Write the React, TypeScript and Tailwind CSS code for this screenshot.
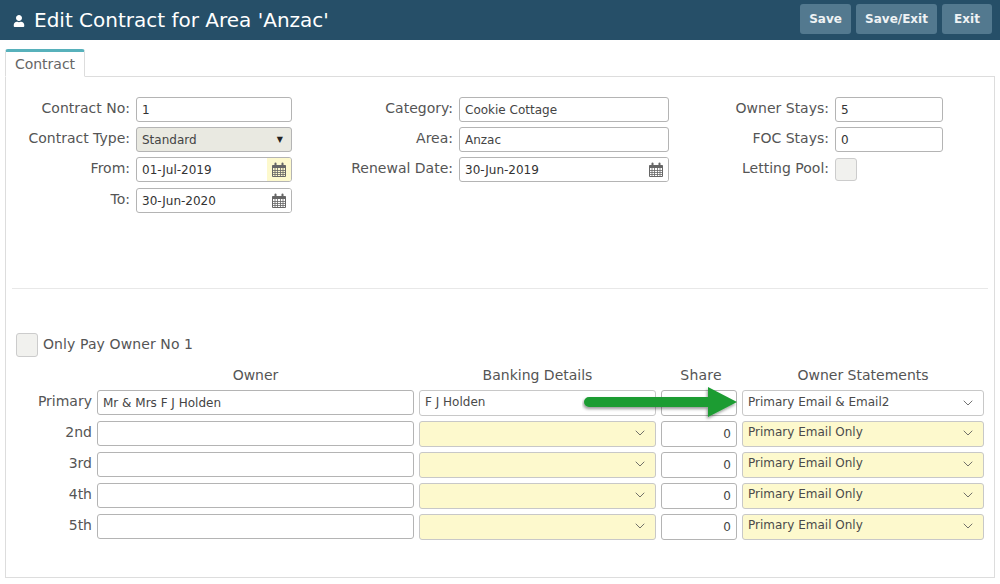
import { ChevronDown } from 'lucide-react';
import { FaUser } from 'react-icons/fa';

const inputClass = 'flex h-[25px] items-center rounded-[3px] border border-[#b4b4b4] px-[5px] text-[12px]';

const buttons = [
  { label: 'Save', width: 'w-[51px]' },
  { label: 'Save/Exit', width: 'w-[81px]' },
  { label: 'Exit', width: 'w-[50px]' },
];

function CalendarIcon() {
  return (
    <svg width="14" height="15" viewBox="0 0 14 15" className="text-[#666]">
      <path d="M0.5 3.5h13v11h-13z" fill="none" stroke="currentColor" />
      <path d="M0.5 3.5h13v2.5h-13z" fill="currentColor" />
      <path
        d="M0 8.5h14M0 10.5h14M0 12.5h14M3 6v8M5.5 6v8M8.5 6v8M11 6v8"
        stroke="currentColor"
        strokeWidth="0.8"
      />
      <rect x="2.5" y="0.5" width="2" height="4" rx="1" fill="currentColor" />
      <rect x="9.5" y="0.5" width="2" height="4" rx="1" fill="currentColor" />
    </svg>
  );
}

function Row({ label, children }: { label: string; children: React.ReactNode }) {
  return (
    <div className="flex h-[25px] items-center justify-end gap-[6px]">
      <span className="-mt-[3px] text-[14px] text-[#555]">{label}</span>
      {children}
    </div>
  );
}

function DateField({ value, width, highlight }: { value: string; width: string; highlight?: boolean }) {
  return (
    <div className={`${inputClass} ${width} justify-between overflow-hidden bg-white pr-0 text-[#333]`}>
      <span>{value}</span>
      <span
        className={`flex h-full w-[24px] items-center justify-center ${highlight ? 'bg-[#fdf9cd]' : 'bg-white'}`}
      >
        <CalendarIcon />
      </span>
    </div>
  );
}

function Select({ value, filled }: { value?: string; filled?: boolean }) {
  return (
    <div
      className={`flex h-[26px] items-center justify-between rounded-[3px] border border-[#c8c8c8] pl-[5px] pr-[7px] text-[12px] text-[#4a4a4a] ${
        filled ? 'bg-[#fdf9cd]' : 'bg-white'
      }`}
    >
      <span className={filled ? '-mt-[5px]' : '-mt-[3px]'}>{value}</span>
      <ChevronDown size={16} strokeWidth={1.25} className={`text-[#555] ${filled ? '-mt-[2px]' : ''}`} />
    </div>
  );
}

const owners = [
  { label: 'Primary', owner: 'Mr & Mrs F J Holden', bank: 'F J Holden', share: '', statement: 'Primary Email & Email2' },
  { label: '2nd', owner: '', bank: '', share: '0', statement: 'Primary Email Only' },
  { label: '3rd', owner: '', bank: '', share: '0', statement: 'Primary Email Only' },
  { label: '4th', owner: '', bank: '', share: '0', statement: 'Primary Email Only' },
  { label: '5th', owner: '', bank: '', share: '0', statement: 'Primary Email Only' },
];

export default function App() {
  return (
    <div className="h-[584px] w-[1000px] overflow-hidden bg-white font-['DejaVu_Sans',Verdana,sans-serif]">
      <header className="flex h-[40px] items-center justify-between bg-[#264f68] pl-[13px] pr-[8px]">
        <div className="flex items-center gap-[9px] text-white">
          <FaUser size={12} className="mt-[2px]" />
          <h1 className="text-[20px] leading-none">Edit Contract for Area 'Anzac'</h1>
        </div>
        <div className="-mt-[2px] flex gap-[5px]">
          {buttons.map((button) => (
            <button
              key={button.label}
              type="button"
              className={`h-[30px] rounded-[3px] bg-[#53798f] text-[12px] font-bold text-[#eef2f4] ${button.width}`}
            >
              {button.label}
            </button>
          ))}
        </div>
      </header>

      <div className="px-[5px] pt-[9px]">
        <div className="relative z-10 -mb-px flex h-[28px] w-[80px] items-center justify-center rounded-t-[3px] border-x border-b border-x-[#ddd] border-b-white border-t-[3px] border-t-[#57b1bb] bg-white text-[14px] text-[#666]">
          Contract
        </div>

        <div className="relative h-[502px] border border-[#ddd]">
          <div className="flex pt-[20px]">
            <div className="flex w-[286px] flex-col gap-[5px]">
              <Row label="Contract No:">
                <div className={`${inputClass} w-[156px] bg-white text-[#333]`}>1</div>
              </Row>
              <Row label="Contract Type:">
                <div className={`${inputClass} w-[156px] justify-between bg-[#e9e9e1] pr-[8px] text-[#444]`}>
                  <span>Standard</span>
                  <span className="text-[8px] text-[#222]">▼</span>
                </div>
              </Row>
              <Row label="From:">
                <DateField value="01-Jul-2019" width="w-[156px]" highlight />
              </Row>
              <div className="mt-[1px]">
                <Row label="To:">
                  <DateField value="30-Jun-2020" width="w-[156px]" />
                </Row>
              </div>
            </div>

            <div className="flex w-[377px] flex-col gap-[5px]">
              <Row label="Category:">
                <div className={`${inputClass} w-[210px] bg-white text-[#444]`}>Cookie Cottage</div>
              </Row>
              <Row label="Area:">
                <div className={`${inputClass} w-[210px] bg-white text-[#444]`}>Anzac</div>
              </Row>
              <Row label="Renewal Date:">
                <DateField value="30-Jun-2019" width="w-[210px]" />
              </Row>
            </div>

            <div className="flex w-[274px] flex-col gap-[5px]">
              <Row label="Owner Stays:">
                <div className={`${inputClass} w-[108px] bg-white text-[#333]`}>5</div>
              </Row>
              <Row label="FOC Stays:">
                <div className={`${inputClass} w-[108px] bg-white text-[#333]`}>0</div>
              </Row>
              <div className="flex h-[25px] items-center justify-end gap-[6px]">
                <span className="-mt-[3px] text-[14px] text-[#555]">Letting Pool:</span>
                <div className="mr-[86px] h-[23px] w-[22px] rounded-[3px] border border-[#ccc] bg-[#f1f1ee]" />
              </div>
            </div>
          </div>

          <hr className="mx-[6px] mt-[75px] border-[#e8e8e8]" />

          <div className="ml-[10px] mt-[44px] flex items-center gap-[5px]">
            <div className="h-[24px] w-[22px] rounded-[3px] border border-[#ccc] bg-[#f1f1ee]" />
            <span className="-mt-[2px] text-[14px] tracking-[0.1px] text-[#555]">Only Pay Owner No 1</span>
          </div>

          <div className="mt-[7px] grid grid-cols-[86px_317px_237px_76px_242px] gap-x-[5px] gap-y-[5px]">
            <div />
            <div className="h-[21px] text-center text-[14px] leading-[22px] text-[#555]">Owner</div>
            <div className="h-[21px] text-center text-[14px] leading-[22px] text-[#555]">Banking Details</div>
            <div className="h-[21px] pl-[4px] text-center text-[14px] leading-[22px] tracking-[0.2px] text-[#555]">Share</div>
            <div className="h-[21px] text-center text-[14px] leading-[22px] text-[#555]">Owner Statements</div>
            {owners.map((row) => (
              <div key={row.label} className="contents">
                <div className="-mt-[1px] flex h-[25px] items-center justify-end text-[14px] text-[#555]">{row.label}</div>
                <div className={`${inputClass} bg-white text-[#444]`}>{row.owner}</div>
                {row.bank ? <Select value={row.bank} /> : <Select filled />}
                <div className={`${inputClass} h-[26px] justify-end bg-white text-[#444]`}>{row.share}</div>
                <Select value={row.statement} filled={row.label !== 'Primary'} />
              </div>
            ))}
          </div>

          {/* annotation arrow over the Primary row */}
          <svg width="170" height="40" viewBox="0 0 170 40" className="absolute left-[576px] top-[307px]">
            <defs>
              <filter id="arrow-shadow" x="-10%" y="-30%" width="120%" height="170%">
                <feDropShadow dx="-1" dy="2" stdDeviation="1.5" floodColor="#000" floodOpacity="0.4" />
              </filter>
            </defs>
            <path
              d="M7 13H126V3L155 18L126 33V23H7a5 5 0 0 1 0-10z"
              fill="#1c9c32"
              filter="url(#arrow-shadow)"
            />
          </svg>
        </div>
      </div>
    </div>
  );
}
